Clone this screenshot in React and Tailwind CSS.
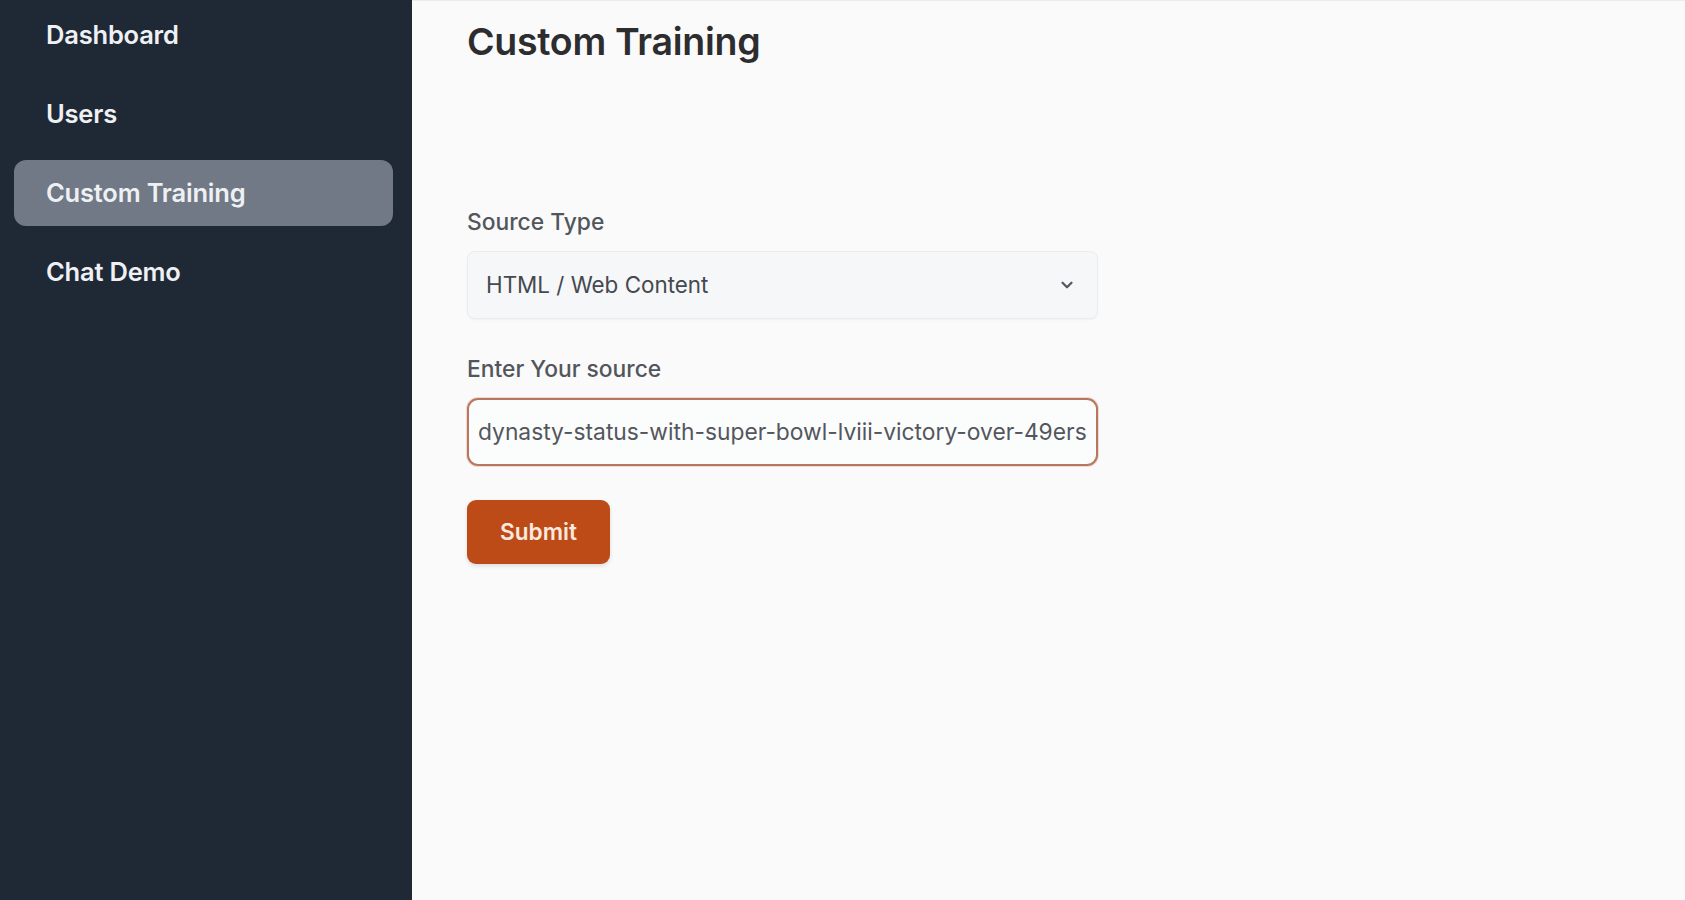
import { ChevronDown } from "lucide-react";

const NAV = ["Dashboard", "Users", "Custom Training", "Chat Demo"];

export default function App() {
  const active = "Custom Training";
  return (
    <div
      className="flex h-[900px] w-full overflow-hidden bg-[#fafafa]"
      style={{ fontFamily: "Inter, 'Noto Sans', sans-serif" }}
    >
      {/* sidebar */}
      <aside className="w-[412px] shrink-0 bg-[#1f2936] pl-[14px] pr-[19px] pt-[2px]">
        <nav className="flex flex-col gap-[13px]">
          {NAV.map((item) => (
            <a
              key={item}
              className={
                "flex h-[66px] items-center rounded-[12px] px-[32px] text-[25.5px] font-semibold tracking-[-0.2px] text-[#eef0f3] " +
                (item === active ? "bg-[#707985]" : "")
              }
            >
              {item}
            </a>
          ))}
        </nav>
      </aside>

      {/* main */}
      <main className="flex-1 border-t border-[#ececec] px-[55px] pt-[17px]">
        <h1 className="text-[37.5px] font-semibold leading-[48px] tracking-[-0.3px] text-[#2d2d2f]">
          Custom Training
        </h1>

        <div className="mt-[142px] flex w-[631px] flex-col">
          <label className="text-[22.8px] font-medium leading-[28px] text-[#52565c]">Source Type</label>
          <div className="mt-[15px] flex h-[68px] items-center justify-between rounded-[8px] border border-[#ececee] bg-[#f5f7f8] pl-[18px] pr-[21px] shadow-[0_1px_2px_rgba(0,0,0,0.04)]">
            <span className="text-[22.4px] text-[#45494f]">HTML / Web Content</span>
            <ChevronDown className="h-[18px] w-[18px] text-[#55595f]" strokeWidth={3} />
          </div>

          <label className="mt-[36px] text-[22.8px] font-medium leading-[28px] text-[#52565c]">Enter Your source</label>
          <div className="mt-[15px] flex h-[68px] items-center overflow-hidden whitespace-nowrap rounded-[11px] border-2 border-[#b9775f] bg-[#fbfcfc] pl-[9px] pr-[9px] shadow-[0_0_0_1px_rgba(194,120,90,0.25)]">
            <span className="text-[22.8px] text-[#53575d]">
              dynasty-status-with-super-bowl-lviii-victory-over-49ers
            </span>
          </div>

          <button className="mt-[34px] flex h-[64px] w-[143px] items-center justify-center rounded-[9px] bg-[#bd4b17] text-[22.6px] font-semibold text-[#fbe9df] shadow-[0_2px_4px_rgba(0,0,0,0.12)]">
            Submit
          </button>
        </div>
      </main>
    </div>
  );
}
